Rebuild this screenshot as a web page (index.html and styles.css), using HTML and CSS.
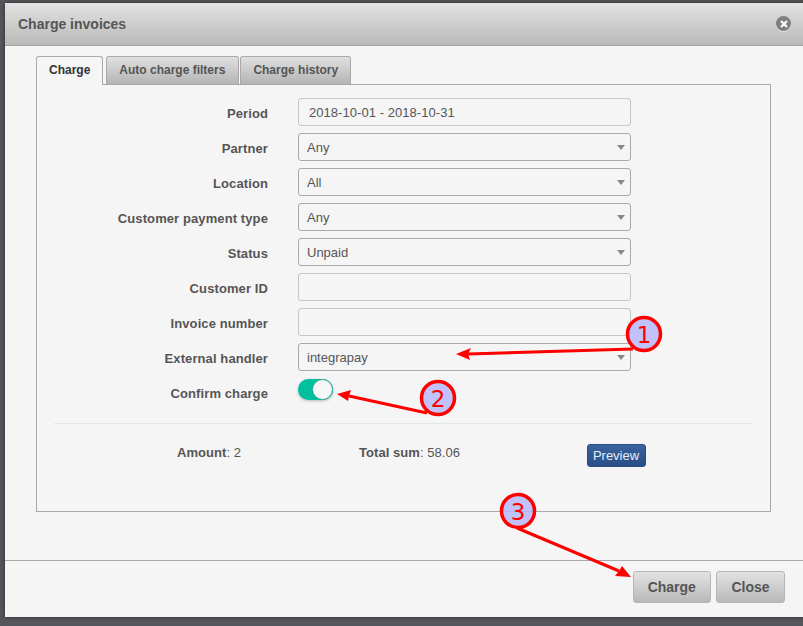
FILE: index.html
```html
<!DOCTYPE html>
<html lang="en">
<head>
  <meta charset="UTF-8" />
  <meta name="viewport" content="width=device-width, initial-scale=1.0"/>
  <title>Charge invoices</title>
  <link rel="stylesheet" href="styles.css">
</head>
<body>
  <div class="modal">
    <div class="modal-header">
      <h1>Charge invoices</h1>
      <span class="close-x">
        <svg width="10" height="10" viewBox="0 0 10 10"><path d="M2 2L8 8M8 2L2 8" stroke="#fff" stroke-width="2.2" fill="none"/></svg>
      </span>
    </div>

    <div class="modal-body">
      <ul class="tabs">
        <li class="tab active">Charge</li>
        <li class="tab">Auto charge filters</li>
        <li class="tab">Charge history</li>
      </ul>
      <div class="tab-content">
        <div class="row"><label>Period</label><div class="field input">2018-10-01 - 2018-10-31</div></div>
        <div class="row"><label>Partner</label><div class="field select">Any</div></div>
        <div class="row"><label>Location</label><div class="field select">All</div></div>
        <div class="row"><label>Customer payment type</label><div class="field select">Any</div></div>
        <div class="row"><label>Status</label><div class="field select">Unpaid</div></div>
        <div class="row"><label>Customer ID</label><div class="field input"></div></div>
        <div class="row"><label>Invoice number</label><div class="field input"></div></div>
        <div class="row"><label>External handler</label><div class="field select">integrapay</div></div>
        <div class="row"><label>Confirm charge</label><span class="switch"><span class="knob"></span></span></div>
        <hr>
        <div class="totals">
          <span class="amount"><b>Amount</b>: 2</span>
          <span class="sum"><b>Total sum</b>: 58.06</span>
          <button class="btn-preview">Preview</button>
        </div>
      </div>
    </div>

    <div class="modal-footer">
      <button class="btn">Charge</button>
      <button class="btn">Close</button>
    </div>
  </div>

  <!-- red callouts drawn over the dialog -->
  <svg class="callouts" width="803" height="626" viewBox="0 0 803 626">
    <g fill="none" stroke="#fe0000" stroke-width="3">
      <path d="M633 349L468 354"/>
      <path d="M427 413L349 396"/>
      <path d="M517 528L619 571"/>
    </g>
    <g fill="#fe0000">
      <path d="M456 354L471 348L468 354L470 360Z"/>
      <path d="M337 394L351 390L349 396L348 401Z"/>
      <path d="M631 577L615 576L619 571L622 566Z"/>
    </g>
    <g fill="#b8b8fa" fill-opacity="0.85" stroke="#fe0000" stroke-width="3.5">
      <circle cx="644" cy="334" r="16.5"/>
      <circle cx="438" cy="398" r="16.5"/>
      <circle cx="518" cy="511" r="16.5"/>
    </g>
    <g class="callout-num">
      <text x="644" y="343">1</text>
      <text x="438" y="407">2</text>
      <text x="518" y="520">3</text>
    </g>
  </svg>
</body>
</html>
```

FILE: styles.css
```css
* { box-sizing: border-box; }
html, body { height: 100%; }
body {
  margin: 0;
  overflow: hidden;
  font-family: "Liberation Sans", Arial, sans-serif;
  background: #55565b;
}
.modal {
  width: 810px;
  height: 614px;
  margin: 3px 0 0 5px;
  background: #f5f5f5;
  display: flex;
  flex-direction: column;
  box-shadow: 0 0 4px rgba(0,0,0,0.5);
}
.modal-header {
  height: 43px;
  padding: 0 12px 0 13px;
  width: 798px;
  display: flex;
  align-items: center;
  justify-content: space-between;
  background: linear-gradient(#e2e2e2, #b9b9b9);
  border-bottom: 1px solid #a3a3a3;
}
.modal-header h1 {
  margin: 0;
  font-size: 14px;
  color: #555;
}
.close-x {
  width: 15px;
  height: 15px;
  margin-top: -1px;
  border-radius: 50%;
  background: #7f7f7f;
  box-shadow: 0 1px 0 #e4e4e4;
  display: flex;
  align-items: center;
  justify-content: center;
}
.modal-body {
  flex: 1;
  width: 798px;
  padding: 10px 32px 0 31px;
}
.tabs {
  list-style: none;
  margin: 0;
  padding: 0;
  height: 29px;
  display: flex;
  gap: 3px;
  position: relative;
  z-index: 1;
}
.tab {
  height: 28px;
  padding: 0 12.5px 0 12px;
  font-size: 12px;
  font-weight: bold;
  line-height: 27px;
  color: #555;
  border: 1px solid #a9a9a9;
  border-bottom: 0;
  border-radius: 3px 3px 0 0;
  background: linear-gradient(#e0e0e0, #b4b4b4);
}
.tab:last-child { margin-left: -2px; padding: 0 11.5px 0 12.5px; }
.tab.active {
  height: 29px;
  padding: 0 12px;
  color: #333;
  background: #f5f5f5;
}
.tab-content {
  height: 428px;
  margin-top: -1px;
  padding: 12px 17px 0;
  border: 1px solid #a9a9a9;
}
.row {
  display: flex;
  align-items: center;
  height: 29px;
  margin-bottom: 6px;
}
.row label {
  width: 214px;
  margin-right: 30px;
  text-align: right;
  font-size: 13px;
  letter-spacing: 0.1px;
  font-weight: bold;
  color: #555;
  padding-top: 4px;
}
.field {
  width: 333px;
  height: 28px;
  padding-left: 8px;
  font-size: 13px;
  line-height: 28px;
  color: #555;
  border-radius: 3px;
  border: 1px solid #a9a9a9;
  position: relative;
}
.input { border-color: #c6c6c6; padding-left: 10px; letter-spacing: 0.05px; }
.select::after {
  content: "";
  position: absolute;
  right: 5px;
  top: 11px;
  border-left: 4px solid transparent;
  border-right: 4px solid transparent;
  border-top: 5px solid #888;
}
.switch {
  width: 35px;
  height: 21px;
  margin-top: -4px;
  border-radius: 11px;
  background: #00c09d;
  position: relative;
  box-shadow: 0 1px 3px rgba(0,0,0,0.25);
}
.knob {
  position: absolute;
  right: 0;
  top: 0;
  width: 21px;
  height: 21px;
  border-radius: 50%;
  background: #f7f7f7;
  border: 1px solid #2fa893;
}
hr {
  margin: 17px 0 0;
  border: 0;
  border-top: 1px solid #e6e6e6;
}
.totals {
  display: flex;
  align-items: center;
  height: 24px;
  margin-top: 19px;
  font-size: 13px;
  letter-spacing: 0.05px;
  color: #555;
}
.amount { margin-left: 123px; width: 182px; padding-bottom: 6px; }
.sum { width: 228px; padding-bottom: 6px; }
.btn-preview {
  width: 59px;
  height: 23px;
  padding: 0 1px 0 0;
  font-family: inherit;
  font-size: 13px;
  color: #e6edf7;
  border: 1px solid #2a4a80;
  border-radius: 3px;
  background: linear-gradient(#3a629f, #2a4d86);
}
.modal-footer {
  height: 57px;
  width: 798px;
  padding: 10px 18px 0 0;
  border-top: 1px solid #a9a9a9;
  display: flex;
  justify-content: flex-end;
  align-items: flex-start;
  gap: 5px;
}
.btn {
  height: 32px;
  padding: 0 14px;
  font-family: inherit;
  font-size: 14px;
  font-weight: bold;
  color: #555;
  border: 1px solid #b5b5b5;
  border-radius: 3px;
  background: linear-gradient(#e2e2e2, #b9b9b9);
}
.btn + .btn { padding: 0 14.5px; }
.callouts {
  position: absolute;
  left: 0;
  top: 0;
}
.callout-num {
  font-family: "DejaVu Sans", sans-serif;
  font-size: 23px;
  fill: #fe0000;
  text-anchor: middle;
}
```
